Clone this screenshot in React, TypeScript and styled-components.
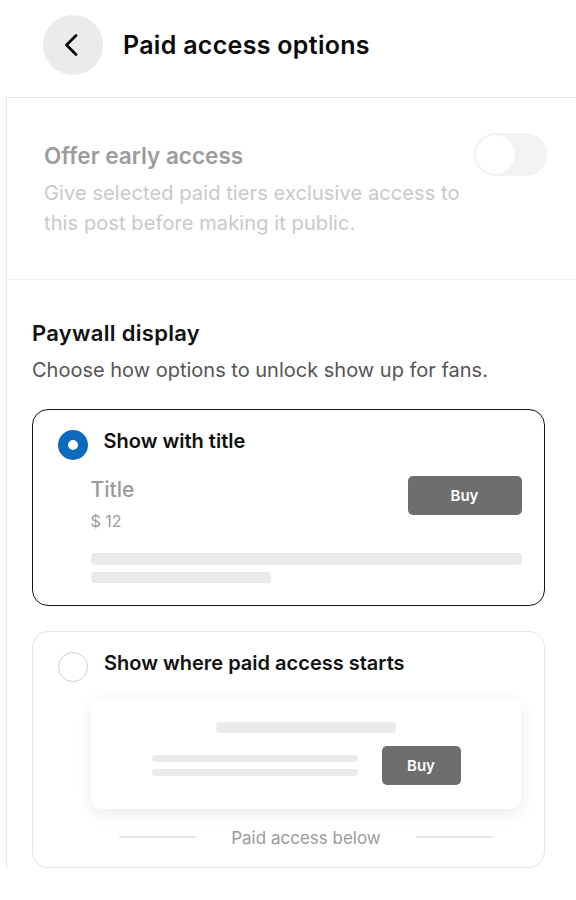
import React from 'react';
import styled, {createGlobalStyle} from 'styled-components';

const Global = createGlobalStyle`
	body {
		margin: 0;
		background: #fff;
		font-family: Inter, 'Noto Sans', 'Liberation Sans', sans-serif;
		color: #111;
	}
`;

const Page = styled.div`
	width: 576px;
	height: 900px;
	overflow: hidden;
`;

const Header = styled.header`
	height: 97px;
	display: flex;
	align-items: center;
	padding-left: 43px;
	gap: 20px;
	box-sizing: border-box;
	padding-bottom: 8px;
`;

const BackButton = styled.button`
	width: 60px;
	height: 60px;
	border-radius: 50%;
	border: none;
	background: #ebebeb;
	display: flex;
	align-items: center;
	justify-content: center;
	padding: 0;
	padding-right: 2px;
`;

const Heading = styled.h1`
	margin: 0;
	font-size: 25px;
	font-weight: 600;
	letter-spacing: 0.3px;
	color: #0a0a0a;
`;

const Panel = styled.div`
	margin-left: 6px;
	border-left: 1px solid #e8e8e8;
	border-top: 1px solid #e8e8e8;
`;

const EarlySection = styled.section`
	height: 182px;
	box-sizing: border-box;
	border-bottom: 1px solid #efefef;
	display: flex;
	justify-content: space-between;
	align-items: flex-start;
	padding: 35px 29px 0 37px;
`;

const EarlyText = styled.div`
	padding-top: 8px;
	max-width: 425px;
`;

const MutedTitle = styled.div`
	font-size: 22.5px;
	line-height: 30px;
	font-weight: 600;
	color: #9c9c9c;
`;

const MutedDesc = styled.div`
	margin-top: 7px;
	font-size: 20px;
	line-height: 30px;
	letter-spacing: 0.1px;
	color: #c9c9c9;
`;

const Toggle = styled.div`
	width: 73px;
	height: 43px;
	border-radius: 22px;
	background: #f3f3f3;
	display: flex;
	align-items: center;
	padding-left: 2px;
	box-sizing: border-box;
`;

const Knob = styled.div`
	width: 39px;
	height: 39px;
	border-radius: 50%;
	background: #fff;
	box-shadow: 0 0 0 1px #f0f0f0;
`;

const PaywallSection = styled.section`
	padding: 39px 31px 0 25px;
`;

const SectionTitle = styled.h2`
	margin: 0;
	font-size: 22px;
	line-height: 28px;
	font-weight: 600;
	letter-spacing: 0.3px;
	color: #111;
`;

const SectionDesc = styled.p`
	margin: 9px 0 0;
	font-size: 20px;
	line-height: 28px;
	color: #555;
`;

const Options = styled.div`
	margin-top: 25px;
	display: flex;
	flex-direction: column;
	gap: 25px;
`;

const Card = styled.div<{$selected?: boolean}>`
	border: ${(p) => (p.$selected ? '1.5px solid #151515' : '1px solid #e6e6e6')};
	border-radius: 16px;
	padding: ${(p) => (p.$selected ? '19.5px 22.5px 22.5px 24.5px' : '20px 23px 18px 25px')};
`;

const OptionRow = styled.div`
	display: flex;
	align-items: center;
	gap: 16px;
`;

const Radio = styled.span<{$checked?: boolean}>`
	width: 30px;
	height: 30px;
	box-sizing: border-box;
	border-radius: 50%;
	flex-shrink: 0;
	border: ${(p) => (p.$checked ? '10px solid #0d6bbd' : '1.5px solid #cfcfcf')};
	background: #fff;
`;

const OptionLabel = styled.span`
	font-size: 20px;
	font-weight: 600;
	color: #111;
	margin-top: -8px;
`;

const TitlePreview = styled.div`
	margin: 16px 0 0 33px;
`;

const PreviewTop = styled.div`
	display: flex;
	justify-content: space-between;
	align-items: flex-start;
`;

const PreviewTitle = styled.div`
	font-size: 21px;
	line-height: 28px;
	font-weight: 500;
	color: #9a9a9a;
`;

const Price = styled.div`
	margin-top: 6px;
	font-size: 16px;
	line-height: 22px;
	color: #9a9a9a;
`;

const BuyButton = styled.div<{$w: number}>`
	width: ${(p) => p.$w}px;
	height: 39px;
	border-radius: 5px;
	background: #6e6e6e;
	color: #fff;
	font-size: 15px;
	font-weight: 600;
	display: flex;
	align-items: center;
	justify-content: center;
	flex-shrink: 0;
`;

const Bar = styled.div<{$w: number | string; $h: number; $mt: number}>`
	width: ${(p) => (typeof p.$w === 'number' ? `${p.$w}px` : p.$w)};
	height: ${(p) => p.$h}px;
	margin-top: ${(p) => p.$mt}px;
	border-radius: 4px;
	background: #ebebeb;
`;

const StartPreview = styled.div`
	margin: 15px 0 0 33px;
	background: #fff;
	border-radius: 10px;
	box-shadow: 0 5px 16px rgba(0, 0, 0, 0.08), 0 0 2px rgba(0, 0, 0, 0.03);
	padding: 25px 0 24px;
	display: flex;
	flex-direction: column;
	align-items: center;
`;

const StartRow = styled.div`
	margin-top: 13px;
	display: flex;
	align-items: center;
	gap: 24px;
`;

const Lines = styled.div`
	display: flex;
	flex-direction: column;
	gap: 7px;
`;

const Divider = styled.div`
	margin: 18px 0 0 33px;
	display: flex;
	align-items: center;
	justify-content: center;
	gap: 35px;
`;

const Rule = styled.div`
	width: 77px;
	height: 2px;
	background: #e8e8e8;
	margin-top: -3px;
`;

const DividerText = styled.span`
	font-size: 17px;
	line-height: 22px;
	color: #9a9a9a;
`;

const ChevronLeft = () => (
	<svg width="24" height="24" viewBox="0 0 24 24" fill="none">
		<path d="M16 2.5 L6.5 12 L16 21.5" stroke="#0a0a0a" strokeWidth="2.8" strokeLinecap="round" strokeLinejoin="round" />
	</svg>
);

const App = () => {
	return (
		<Page>
			<Global />
			<Header>
				<BackButton aria-label="Back">
					<ChevronLeft />
				</BackButton>
				<Heading>Paid access options</Heading>
			</Header>
			<Panel>
				<EarlySection>
					<EarlyText>
						<MutedTitle>Offer early access</MutedTitle>
						<MutedDesc>Give selected paid tiers exclusive access to this post before making it public.</MutedDesc>
					</EarlyText>
					<Toggle>
						<Knob />
					</Toggle>
				</EarlySection>
				<PaywallSection>
					<SectionTitle>Paywall display</SectionTitle>
					<SectionDesc>Choose how options to unlock show up for fans.</SectionDesc>
					<Options>
						<Card $selected>
							<OptionRow>
								<Radio $checked />
								<OptionLabel>Show with title</OptionLabel>
							</OptionRow>
							<TitlePreview>
								<PreviewTop>
									<div>
										<PreviewTitle>Title</PreviewTitle>
										<Price>$ 12</Price>
									</div>
									<BuyButton $w={114}>Buy</BuyButton>
								</PreviewTop>
								<Bar $w="100%" $h={12} $mt={21} />
								<Bar $w={180} $h={11} $mt={7} />
							</TitlePreview>
						</Card>
						<Card>
							<OptionRow>
								<Radio />
								<OptionLabel>Show where paid access starts</OptionLabel>
							</OptionRow>
							<StartPreview>
								<Bar $w={180} $h={11} $mt={0} />
								<StartRow>
									<Lines>
										<Bar $w={206} $h={7} $mt={0} />
										<Bar $w={206} $h={7} $mt={0} />
									</Lines>
									<BuyButton $w={79}>Buy</BuyButton>
								</StartRow>
							</StartPreview>
							<Divider>
								<Rule />
								<DividerText>Paid access below</DividerText>
								<Rule />
							</Divider>
						</Card>
					</Options>
				</PaywallSection>
			</Panel>
		</Page>
	);
};

export default App;
